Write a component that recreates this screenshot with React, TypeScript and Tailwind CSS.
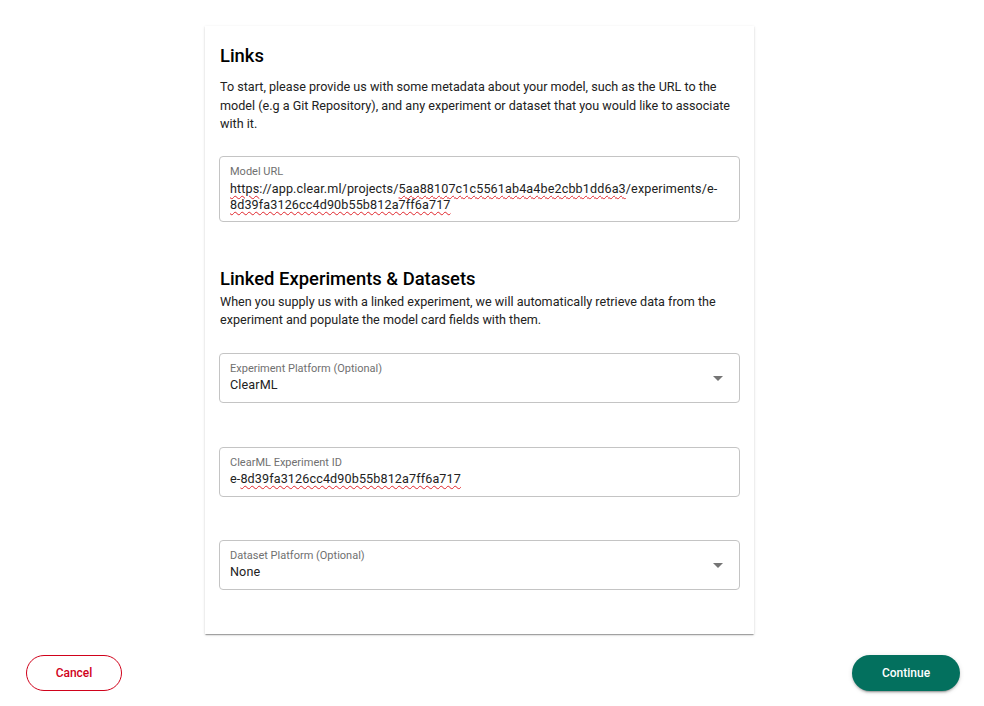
const squiggle = 'underline decoration-wavy decoration-[#e0252b] decoration-1 underline-offset-[2px]'

function ArrowDown() {
  return (
    <svg viewBox="0 0 24 24" className="absolute right-[9px] top-1/2 h-6 w-6 -translate-y-1/2 fill-[#757575]">
      <path d="M7 10l5 5 5-5z" />
    </svg>
  )
}

function SelectField({ label, value }: { label: string; value: string }) {
  return (
    <div className="relative rounded border border-[#c4c4c4] px-[10px] pt-[8px] pb-[8px]">
      <p className="text-[11px] leading-[14px] text-[#707070]">{label}</p>
      <p className="text-[12.6px] leading-[18px] tracking-[0.118px] text-[#222]">{value}</p>
      <ArrowDown />
    </div>
  )
}

export default function App() {
  return (
    <div className="min-h-[706px] bg-white pt-[26px] font-['Roboto',sans-serif] text-[#222]">
      <div className="ml-[205px] w-[549px] bg-white px-[14px] pt-[16px] pb-[44px] shadow-[0_2px_1px_-1px_rgba(0,0,0,0.2),0_1px_1px_0_rgba(0,0,0,0.14),0_1px_3px_0_rgba(0,0,0,0.12)]">
        <h2 className="pl-px text-[18.4px] leading-7 font-medium text-black">Links</h2>
        <p className="mt-2 pl-px text-[12.6px] leading-[18.5px]">
          To start, please provide us with some metadata about your model, such as the URL to the model (e.g a Git
          Repository), and any experiment or dataset that you would like to associate with it.
        </p>

        <div className="mt-[22px] rounded border border-[#c4c4c4] px-[10px] pt-[8px] pb-[7px]">
          <p className="text-[11px] leading-[14px] text-[#707070]">Model URL</p>
          <p className="mt-[2px] text-[12.6px] leading-[16.5px] tracking-[0.118px] text-[#222]">
            <span className={squiggle}>https</span>://app.clear.ml/projects/
            <span className={squiggle}>5aa88107c1c5561ab4a4be2cbb1dd6a3</span>/experiments/e-
            <br />
            <span className={squiggle}>8d39fa3126cc4d90b55b812a7ff6a717</span>
          </p>
        </div>

        <h2 className="mt-[43px] pl-px text-[18.4px] leading-7 font-medium text-black">
          Linked Experiments &amp; Datasets
        </h2>
        <p className="pl-px text-[12.6px] leading-[18.5px]">
          When you supply us with a linked experiment, we will automatically retrieve data from the experiment and
          populate the model card fields with them.
        </p>

        <div className="mt-[23px]">
          <SelectField label="Experiment Platform (Optional)" value="ClearML" />
        </div>

        <div className="mt-[44px] rounded border border-[#c4c4c4] px-[10px] pt-[8px] pb-[8px]">
          <p className="text-[11px] leading-[14px] text-[#707070]">ClearML Experiment ID</p>
          <p className="text-[12.6px] leading-[18px] tracking-[0.118px] text-[#222]">
            e-<span className={squiggle}>8d39fa3126cc4d90b55b812a7ff6a717</span>
          </p>
        </div>

        <div className="mt-[43px]">
          <SelectField label="Dataset Platform (Optional)" value="None" />
        </div>
      </div>

      <div className="mt-[21px] flex items-center justify-between px-[24px]">
        <button className="ml-[2px] h-9 w-24 rounded-full border border-[#d0021b] text-xs font-medium text-[#d0021b]">
          Cancel
        </button>
        <button className="h-9 w-[108px] rounded-full bg-[#03705e] text-xs font-medium text-white shadow-[0_3px_1px_-2px_rgba(0,0,0,0.2),0_2px_2px_0_rgba(0,0,0,0.14),0_1px_5px_0_rgba(0,0,0,0.12)]">
          Continue
        </button>
      </div>
    </div>
  )
}
